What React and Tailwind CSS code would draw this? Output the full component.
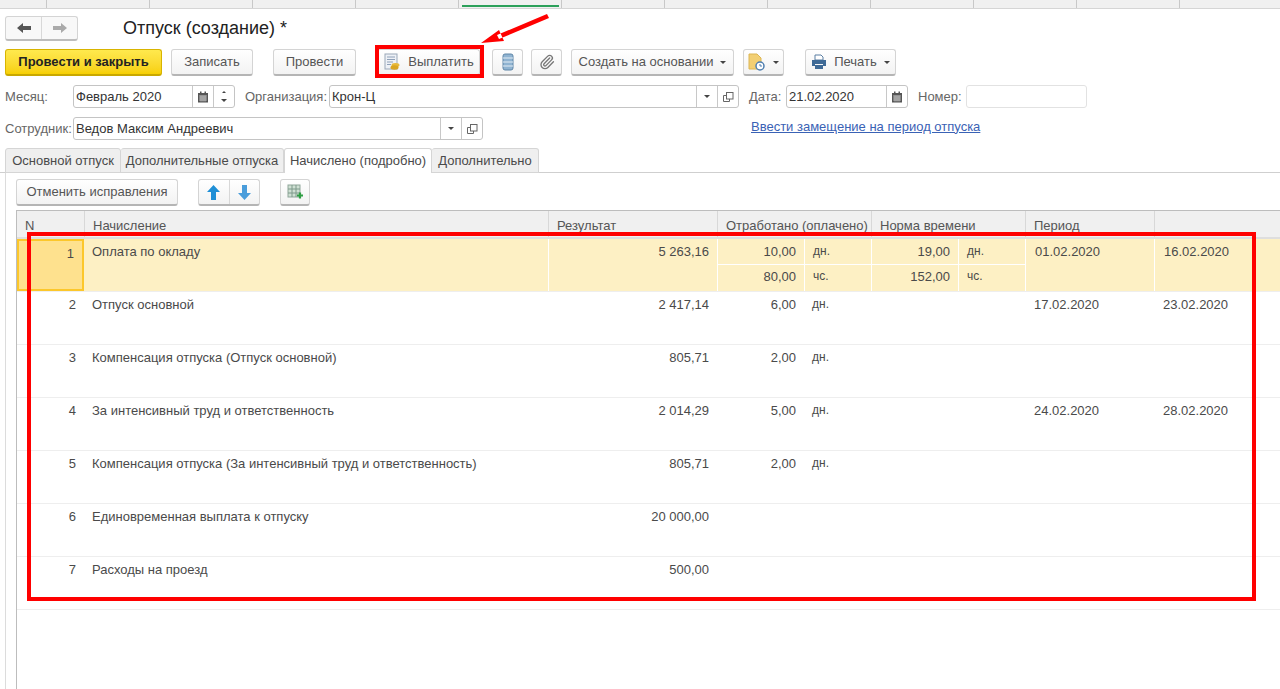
import { Paperclip } from "lucide-react";

const btn = "flex items-center justify-center h-[27px] rounded-[3px] border border-[#d4d4d4] border-b-[#b5b5b5] border-b-2 bg-gradient-to-b from-white to-[#f3f3f3] text-[#555]";

const rows = [
  { n: 1, name: "Оплата по окладу", sum: "5 263,16", a: "10,00", au: "дн.", b: "19,00", bu: "дн.", from: "01.02.2020", to: "16.02.2020", a2: "80,00", au2: "чс.", b2: "152,00", bu2: "чс." },
  { n: 2, name: "Отпуск основной", sum: "2 417,14", a: "6,00", au: "дн.", from: "17.02.2020", to: "23.02.2020" },
  { n: 3, name: "Компенсация отпуска (Отпуск основной)", sum: "805,71", a: "2,00", au: "дн." },
  { n: 4, name: "За интенсивный труд и ответственность", sum: "2 014,29", a: "5,00", au: "дн.", from: "24.02.2020", to: "28.02.2020" },
  { n: 5, name: "Компенсация отпуска (За интенсивный труд и ответственность)", sum: "805,71", a: "2,00", au: "дн." },
  { n: 6, name: "Единовременная выплата к отпуску", sum: "20 000,00" },
  { n: 7, name: "Расходы на проезд", sum: "500,00" },
];

const CalendarIcon = () => (
  <svg width="12" height="12" viewBox="0 0 12 12">
    <rect x="1" y="2" width="10" height="9.5" fill="#555" />
    <rect x="3" y="0.5" width="1.5" height="2.5" fill="#555" />
    <rect x="7.5" y="0.5" width="1.5" height="2.5" fill="#555" />
    <path d="M2 5h8M2 7h8M2 9h8M4 4.5v6M6 4.5v6M8 4.5v6" stroke="#ddd" strokeWidth="0.7" />
  </svg>
);

const OpenIcon = () => (
  <svg width="12" height="12" viewBox="0 0 12 12" fill="none" stroke="#666">
    <rect x="4.5" y="1.5" width="6.5" height="6.5" />
    <path d="M4.5 4.5H1.5V10.5H7.5V8" />
  </svg>
);

const Caret = () => <span className="inline-block w-0 h-0 border-x-[3px] border-x-transparent border-t-[3px] border-t-[#444]" />;

const Cell = ({ children, w }) => (
  <div className={`flex items-center justify-center h-full border-l border-[#c8c8c8] ${w}`}>{children}</div>
);

const Field = ({ value, className, children }) => (
  <div className={`flex h-[23px] rounded-[3px] border border-[#c4c4c4] bg-white text-[13px] text-[#333] ${className}`}>
    <div className="flex-1 px-[2px] leading-[21px] truncate">{value}</div>
    {children}
  </div>
);

const Label = ({ children, className }) => <div className={`text-[13px] text-[#666] ${className}`}>{children}</div>;

const gridCols = "grid grid-cols-[67px_464px_169px_87px_67px_87px_67px_129px_1fr]";

const TableRow = ({ row }) => {
  const active = row.n === 1;
  const cell = `pt-[5px] border-white ${active ? "border-l" : ""}`;
  return (
    <div className={`${gridCols} h-[53px] border-b border-[#eeeeee] text-[13px] text-[#4a4a4a] leading-[15px] ${active ? "bg-[#fdf0c4] h-[52px]" : ""}`}>
      <div className={`pt-[5px] pr-[8px] text-right ${active ? "border-2 border-[#fcc72b] bg-[#fee18e] pt-[3px]" : ""}`}>{row.n}</div>
      <div className="pt-[5px] pl-[8px]">{row.name}</div>
      <div className={`${cell} pr-[8px] text-right`}>{row.sum}</div>
      {["a", "au", "b", "bu"].map((k, i) => (
        <div key={k} className={`flex flex-col ${active ? "border-l border-white" : ""}`}>
          <div className={`h-[26px] pt-[5px] ${i % 2 ? "pl-[8px] text-[12px]" : "pr-[8px] text-right"} ${active ? "border-b border-white" : ""}`}>{row[k]}</div>
          <div className={`pt-[4px] ${i % 2 ? "pl-[8px] text-[12px]" : "pr-[8px] text-right"}`}>{row[k + "2"]}</div>
        </div>
      ))}
      <div className={`${cell} pl-[9px]`}>{row.from}</div>
      <div className={`${cell} pl-[9px]`}>{row.to}</div>
    </div>
  );
};

export default function App() {
  return (
    <div className="relative w-[1280px] h-[689px] overflow-hidden bg-white font-[family-name:Liberation_Sans,Arial,sans-serif]">
      {/* вкладки сверху */}
      <div className="flex h-[9px] bg-[#f0f0f0] border-b border-[#d5d5d5] pl-[46px]">
        {Array.from({ length: 12 }).map((_, i) => (
          <div key={i} className="relative w-[103px] shrink-0 border-l border-[#c8c8c8]">
            {i === 4 && <div className="absolute left-[3px] right-[2px] bottom-[1px] h-[2px] bg-[#2ca05a]" />}
          </div>
        ))}
      </div>

      {/* заголовок */}
      <div className="flex items-center h-[25px] mt-[7px] ml-[5px]">
        <div className="flex h-[25px] w-[73px] rounded-[3px] border border-[#d4d4d4] border-b-2 border-b-[#bdbdbd] bg-[#f8f8f8]">
          <div className="flex-1 flex items-center justify-center border-r border-[#d8d8d8]">
            <svg width="14" height="10" viewBox="0 0 14 10"><path d="M0 5L6 0V3H14V7H6V10Z" fill="#555" /></svg>
          </div>
          <div className="flex-1 flex items-center justify-center">
            <svg width="14" height="10" viewBox="0 0 14 10"><path d="M14 5L8 0V3H0V7H8V10Z" fill="#aaa" /></svg>
          </div>
        </div>
        <div className="ml-[45px] text-[18px] text-[#222] leading-[25px]">Отпуск (создание) *</div>
      </div>

      {/* панель команд */}
      <div className="flex mt-[8px] ml-[5px] text-[13px]">
        <div className="flex items-center justify-center h-[27px] w-[157px] rounded-[3px] border border-[#d8b400] border-b-2 border-b-[#c9a800] bg-gradient-to-b from-[#ffe94d] to-[#f7d000] font-bold text-[#222]">Провести и закрыть</div>
        <div className={`${btn} w-[82px] ml-[9px]`}>Записать</div>
        <div className={`${btn} w-[83px] ml-[20px]`}>Провести</div>
        <div className={`${btn} w-[103px] ml-[21px] gap-[7px]`}>
          <svg width="18" height="18" viewBox="0 0 18 18">
            <rect x="2" y="1" width="12" height="15" fill="#eef1f6" stroke="#9aa7b8" />
            <path d="M4 4h8M4 6.5h8M4 9h6M4 11.5h4" stroke="#8ea0b8" />
            <ellipse cx="12.5" cy="12" rx="4" ry="2" fill="#e8b93a" />
            <ellipse cx="11.5" cy="14.5" rx="4" ry="2.2" fill="#d9a421" />
          </svg>
          Выплатить
        </div>
        <div className={`${btn} w-[31px] ml-[12px]`}>
          <svg width="12" height="18" viewBox="0 0 12 18">
            <rect x="1" y="1" width="10" height="16" rx="2" fill="#8fb3d1" stroke="#5f86a8" />
            <path d="M1 5h10M1 9h10M1 13h10" stroke="#e3edf5" />
          </svg>
        </div>
        <div className={`${btn} w-[31px] ml-[8px]`}><Paperclip size={16} color="#777" strokeWidth={2} /></div>
        <div className={`${btn} w-[163px] ml-[9px] gap-[7px]`}>Создать на основании <Caret /></div>
        <div className={`${btn} w-[41px] ml-[9px] gap-[8px]`}>
          <svg width="17" height="18" viewBox="0 0 17 18">
            <path d="M1 1H9L13 5V16H1Z" fill="#f2cf73" stroke="#dcb654" />
            <circle cx="12" cy="13" r="4" fill="#fff" stroke="#4f7fb0" strokeWidth="1.5" />
            <path d="M12 11v2h2" stroke="#4f7fb0" fill="none" />
          </svg>
          <Caret />
        </div>
        <div className={`${btn} w-[91px] ml-[21px] gap-[7px]`}>
          <svg width="16" height="16" viewBox="0 0 16 16">
            <path d="M4 1H10L12 3V6H4Z" fill="#fff" stroke="#5b7fa3" />
            <path d="M1 6H15V12H12V10H4V12H1Z" fill="#3f6a96" />
            <rect x="4" y="11" width="8" height="4" fill="#3f6a96" />
          </svg>
          Печать <Caret />
        </div>
      </div>

      {/* первая строка полей */}
      <div className="flex items-center mt-[9px] ml-[5px]">
        <Label className="w-[68px]">Месяц:</Label>
        <Field value="Февраль 2020" className="w-[162px]">
          <Cell w="w-[21px]"><CalendarIcon /></Cell>
          <div className="w-[21px] flex flex-col items-center justify-center border-l border-[#c8c8c8] h-full">
            <span className="inline-block w-0 h-0 border-x-[2px] border-x-transparent border-b-[2px] border-b-[#444] mb-[6px]" />
            <Caret />
          </div>
        </Field>
        <Label className="ml-[10px] w-[84px]">Организация:</Label>
        <Field value="Крон-Ц" className="w-[410px]">
          <Cell w="w-[21px]"><Caret /></Cell>
          <Cell w="w-[21px]"><OpenIcon /></Cell>
        </Field>
        <Label className="ml-[10px] w-[37px]">Дата:</Label>
        <Field value="21.02.2020" className="w-[122px]">
          <Cell w="w-[21px]"><CalendarIcon /></Cell>
        </Field>
        <Label className="ml-[10px] w-[48px]">Номер:</Label>
        <div className="h-[23px] w-[121px] rounded-[3px] border border-[#e2e2e2]" />
      </div>

      {/* вторая строка полей */}
      <div className="flex items-center mt-[9px] ml-[5px]">
        <Label className="w-[68px]">Сотрудник:</Label>
        <Field value="Ведов Максим Андреевич" className="w-[410px]">
          <Cell w="w-[21px]"><Caret /></Cell>
          <Cell w="w-[21px]"><OpenIcon /></Cell>
        </Field>
        <a className="ml-[268px] -mt-[4px] text-[13px] text-[#3a62b5] underline">Ввести замещение на период отпуска</a>
      </div>

      {/* закладки */}
      <div className="flex h-[25px] mt-[8px] pl-[5px] border-b border-[#cfcfcf] text-[13px] text-[#4a4a4a]">
        <div className="w-[116px] h-[25px] leading-[23px] text-center bg-[#efefef] border border-[#d5d5d5] rounded-t-[3px]">Основной отпуск</div>
        <div className="w-[163px] h-[25px] leading-[23px] text-center bg-[#efefef] border border-l-0 border-[#d5d5d5] rounded-t-[3px]">Дополнительные отпуска</div>
        <div className="w-[148px] h-[25px] leading-[23px] text-center bg-white border-t border-x border-[#d5d5d5] rounded-t-[3px] relative z-10">Начислено (подробно)</div>
        <div className="w-[107px] h-[25px] leading-[23px] text-center bg-[#efefef] border border-l-0 border-[#d5d5d5] rounded-t-[3px]">Дополнительно</div>
      </div>

      {/* панель таблицы и таблица */}
      <div className="ml-[5px] border-l border-[#dcdcdc] h-[516px] pl-[10px]">
        <div className="flex pt-[6px] text-[13px]">
          <div className={`${btn} w-[162px]`}>Отменить исправления</div>
          <div className={`${btn} w-[62px] ml-[20px]`}>
            <div className="flex-1 flex items-center justify-center border-r border-[#d8d8d8] h-full">
              <svg width="13" height="15" viewBox="0 0 13 15"><path d="M6.5 0L13 7H9V15H4V7H0Z" fill="#1f8fd6" /></svg>
            </div>
            <div className="flex-1 flex items-center justify-center h-full">
              <svg width="13" height="15" viewBox="0 0 13 15"><path d="M6.5 15L13 8H9V0H4V8H0Z" fill="#4a9ddb" /></svg>
            </div>
          </div>
          <div className={`${btn} w-[30px] ml-[20px]`}>
            <svg width="17" height="16" viewBox="0 0 17 16">
              <rect x="1" y="1" width="12" height="12" fill="#cfe0d3" stroke="#8fa69a" />
              <path d="M5 1v12M9 1v12M1 5h12M1 9h12" stroke="#7f9a8c" />
              <path d="M10 11.5h6M13 8.5v6" stroke="#2f9e44" strokeWidth="2.2" />
            </svg>
          </div>
        </div>

        <div className="mt-[4px] border-l border-t border-[#bdbdbd] h-[479px]">
          <div className={`${gridCols} h-[28px] bg-[#f0f0f0] border-b-2 border-[#dedede] text-[13px] text-[#555]`}>
            <div className="pl-[8px] pt-[5px]">N</div>
            <div className="pl-[8px] pt-[5px] border-l border-[#d8d8d8]">Начисление</div>
            <div className="pl-[8px] pt-[5px] border-l border-[#d8d8d8]">Результат</div>
            <div className="col-span-2 pl-[8px] pt-[5px] border-l border-[#d8d8d8] whitespace-nowrap">Отработано (оплачено)</div>
            <div className="col-span-2 pl-[8px] pt-[5px] border-l border-[#d8d8d8]">Норма времени</div>
            <div className="pl-[8px] pt-[5px] border-l border-[#d8d8d8]">Период</div>
            <div className="border-l border-[#d8d8d8]" />
          </div>
          {rows.map(row => (
            <TableRow key={row.n} row={row} />
          ))}
        </div>
      </div>

      {/* красные пометки поверх */}
      <div className="absolute left-[375px] top-[45px] w-[109px] h-[33px] border-[4px] border-[#ff0000]" />
      <div className="absolute left-[27px] top-[232px] w-[1229px] h-[369px] border-[4px] border-[#ff0000]" />
      <svg className="absolute left-[475px] top-[10px]" width="80" height="40" viewBox="0 0 80 40">
        <path d="M72 4L22 25L24 29L74 8Z M6 33L24 20L29 31Z" fill="#ff0000" />
      </svg>
    </div>
  );
}
